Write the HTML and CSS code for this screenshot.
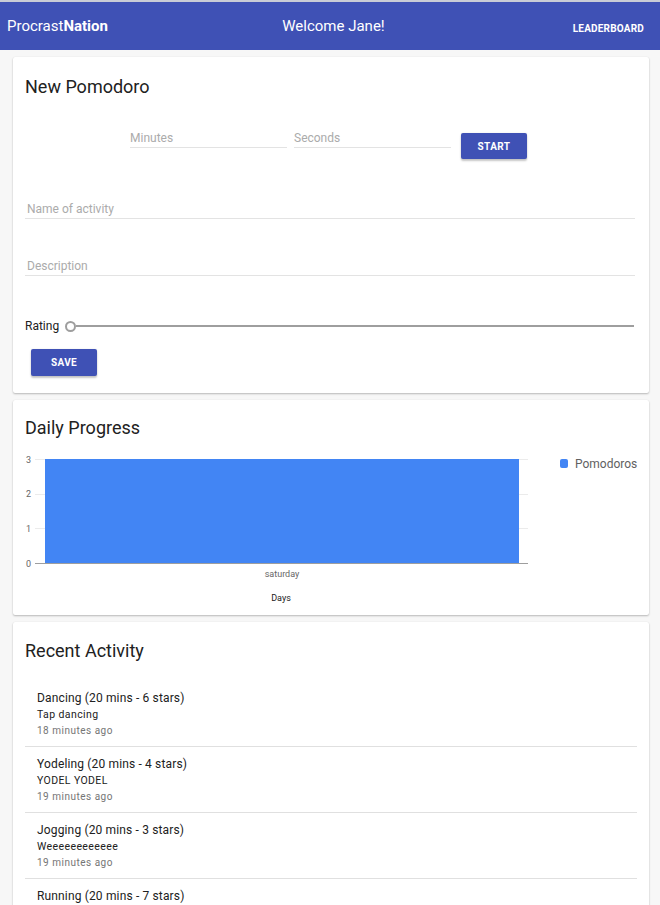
FILE: index.html
```html
<!DOCTYPE html>
<html>
<head>
<meta charset="utf-8">
<link rel="stylesheet" href="styles.css">
</head>
<body>
<header class="topbar">
  <div class="brand">Procrast<b>Nation</b></div>
  <div class="welcome">Welcome Jane!</div>
  <div class="nav"><a class="nav-link">LEADERBOARD</a></div>
</header>

<main class="main">
  <section class="card card-pomodoro">
    <h2 class="card-title">New Pomodoro</h2>
    <div class="timer-row">
      <input class="field field-short" placeholder="Minutes">
      <input class="field field-short" placeholder="Seconds">
      <button class="btn btn-start">START</button>
    </div>
    <input class="field field-wide field-name" placeholder="Name of activity">
    <input class="field field-wide field-desc" placeholder="Description">
    <div class="rating-row">
      <span class="rating-label">Rating</span>
      <div class="slider">
        <span class="slider-thumb"></span>
        <span class="slider-track"></span>
      </div>
    </div>
    <button class="btn btn-save">SAVE</button>
  </section>

  <section class="card card-progress">
    <h2 class="card-title">Daily Progress</h2>
    <div class="chart-row">
      <svg class="chart" width="510" height="160" viewBox="0 0 510 160">
        <g class="grid">
          <line x1="10" y1="9.5" x2="503" y2="9.5"/>
          <line x1="10" y1="44.5" x2="503" y2="44.5"/>
          <line x1="10" y1="78.5" x2="503" y2="78.5"/>
        </g>
        <rect class="bar" x="20" y="9" width="474" height="104"/>
        <line class="axis" x1="10" y1="113.5" x2="503" y2="113.5"/>
        <g class="ylabels">
          <text x="6" y="12.5">3</text>
          <text x="6" y="47">2</text>
          <text x="6" y="81.5">1</text>
          <text x="6" y="116.5">0</text>
        </g>
        <text class="xlabel" x="257" y="127">saturday</text>
        <text class="xtitle" x="256" y="151">Days</text>
      </svg>
      <div class="legend">
        <span class="legend-swatch"></span>
        <span class="legend-text">Pomodoros</span>
      </div>
    </div>
  </section>

  <section class="card card-activity">
    <h2 class="card-title">Recent Activity</h2>
    <ul class="activity-list">
      <li class="activity">
        <div class="activity-title">Dancing (20 mins - 6 stars)</div>
        <div class="activity-desc">Tap dancing</div>
        <div class="activity-time">18 minutes ago</div>
      </li>
      <li class="activity">
        <div class="activity-title">Yodeling (20 mins - 4 stars)</div>
        <div class="activity-desc">YODEL YODEL</div>
        <div class="activity-time">19 minutes ago</div>
      </li>
      <li class="activity">
        <div class="activity-title">Jogging (20 mins - 3 stars)</div>
        <div class="activity-desc">Weeeeeeeeeeee</div>
        <div class="activity-time">19 minutes ago</div>
      </li>
      <li class="activity">
        <div class="activity-title">Running (20 mins - 7 stars)</div>
      </li>
    </ul>
  </section>
</main>
</body>
</html>
```

FILE: styles.css
```css
* { box-sizing: border-box; }

html, body {
  margin: 0;
  padding: 0;
}

body {
  background: #f7f7f7;
  font-family: Roboto, "Noto Sans", Arial, sans-serif;
  color: #212121;
  border-top: 2px solid #c9ccd6;
  overflow: hidden;
}

.topbar {
  height: 48px;
  background: #3f51b5;
  color: #fff;
  display: grid;
  grid-template-columns: 1fr auto 1fr;
  align-items: center;
  padding: 0 16px 0 7px;
}

.brand {
  font-size: 15px;
  letter-spacing: 0;
}
.brand b { font-weight: 700; }

.welcome {
  font-size: 15px;
  padding-left: 16px;
}

.nav {
  justify-self: end;
}
.nav-link {
  font-size: 10px;
  font-weight: 700;
  letter-spacing: 0.2px;
  color: #fff;
}

.main {
  padding: 7px 11px 0 13px;
  display: flex;
  flex-direction: column;
  gap: 7px;
}

.card {
  background: #fff;
  border-radius: 2px;
  box-shadow: 0 1px 2px rgba(0,0,0,0.25), 0 0 1px rgba(0,0,0,0.08);
  padding: 18px 12px 17px;
}

.card-title {
  margin: 0;
  font-size: 18px;
  font-weight: 400;
  line-height: 24px;
  color: #212121;
}

/* timer row */
.timer-row {
  display: flex;
  align-items: flex-start;
  justify-content: center;
  margin-top: 32px;
  padding-right: 5px;
}

.field {
  border: none;
  border-bottom: 1px solid #e3e3e3;
  font-family: inherit;
  font-size: 12px;
  line-height: 14px;
  height: 17px;
  padding: 0 0 2px 0;
  color: #212121;
  background: transparent;
  outline: none;
  display: block;
}
.field::placeholder { color: #ababab; }

.field-short {
  width: 157px;
  margin-right: 7px;
}
.field-short + .field-short { margin-right: 10px; }

.btn {
  border: none;
  border-radius: 2px;
  background: #3f51b5;
  color: #fff;
  font-family: inherit;
  font-size: 10px;
  font-weight: 700;
  letter-spacing: 0.4px;
  width: 66px;
  height: 27px;
  padding: 0;
  box-shadow: 0 2px 2px rgba(0,0,0,0.22), 0 0 2px rgba(0,0,0,0.1);
  display: block;
}

.btn-start {
  margin-top: 2px;
  height: 26px;
}

.field-wide {
  width: 610px;
  margin-left: 0;
  padding-left: 2px;
}
.field-name { margin-top: 43px; }
.field-desc { margin-top: 40px; }

.rating-row {
  display: flex;
  align-items: center;
  margin-top: 42px;
  height: 14px;
}
.rating-label {
  font-size: 12px;
  line-height: 14px;
  color: #212121;
  position: relative;
  top: 1px;
}
.slider {
  flex: 1;
  display: flex;
  align-items: center;
  margin-left: 6px;
  margin-right: 3px;
  position: relative;
  top: 1px;
}
.slider-thumb {
  width: 11px;
  height: 11px;
  border: 2px solid #9e9e9e;
  border-radius: 50%;
  flex: none;
}
.slider-track {
  flex: 1;
  height: 2px;
  background: #9e9e9e;
}

.btn-save {
  margin-top: 17px;
  margin-left: 6px;
}

/* chart */
.card-progress {
  padding-top: 16px;
  padding-bottom: 5px;
}
.chart-row {
  display: flex;
  align-items: flex-start;
  margin-top: 10px;
}
.chart { display: block; flex: none; }
.grid line { stroke: #ebebeb; stroke-width: 1; }
.bar { fill: #4285f4; }
.axis { stroke: #9e9e9e; stroke-width: 1; }
.ylabels text {
  font-family: Roboto, Arial, sans-serif;
  font-size: 9px;
  fill: #666;
  text-anchor: end;
}
.xlabel {
  font-family: Roboto, Arial, sans-serif;
  font-size: 9px;
  fill: #666;
  text-anchor: middle;
}
.xtitle {
  font-family: Roboto, Arial, sans-serif;
  font-size: 9px;
  fill: #222;
  text-anchor: middle;
}
.legend {
  margin-left: 25px;
  padding-top: 9px;
  display: flex;
  align-items: flex-start;
  gap: 7px;
}
.legend-swatch {
  width: 8px;
  height: 9px;
  border-radius: 2px;
  background: #4285f4;
  flex: none;
}
.legend-text {
  font-size: 12px;
  line-height: 14px;
  color: #616161;
  margin-top: -2px;
}

/* activity */
.card-activity {
  padding-top: 17px;
}
.activity-list {
  list-style: none;
  margin: 18px 0 0;
  padding: 0;
}
.activity {
  padding: 9px 12px 7px;
  border-bottom: 1px solid #e0e0e0;
}
.activity-title {
  font-size: 12px;
  letter-spacing: 0.15px;
  line-height: 17px;
  color: #212121;
}
.activity-desc {
  font-size: 10.5px;
  line-height: 16px;
  letter-spacing: 0.4px;
  color: #212121;
}
.activity-time {
  font-size: 10px;
  line-height: 16px;
  letter-spacing: 0.5px;
  color: #757575;
}
```
